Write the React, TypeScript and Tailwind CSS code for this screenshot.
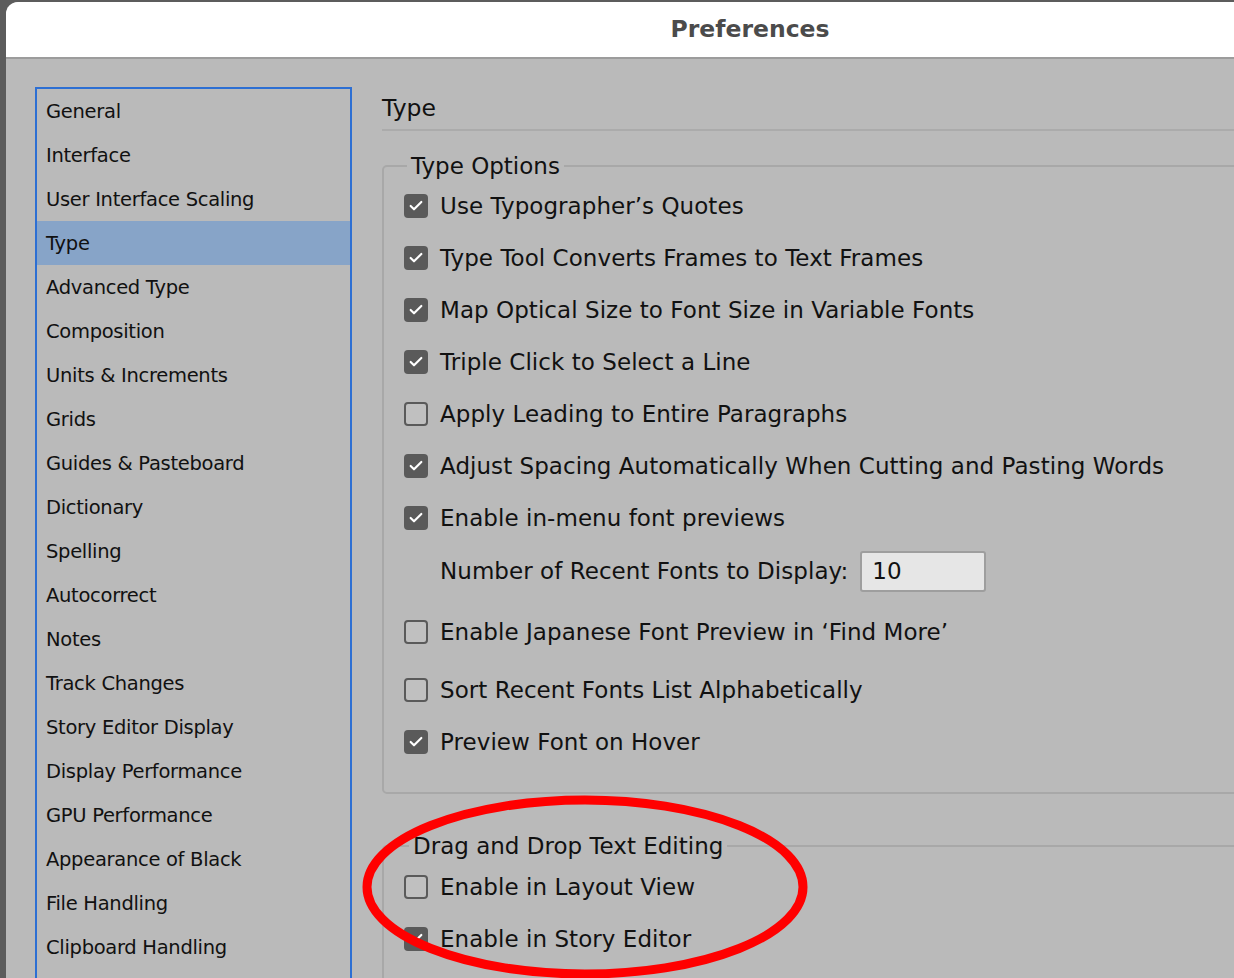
import { Check } from 'lucide-react';

const font = { fontFamily: '"DejaVu Sans", "Liberation Sans", sans-serif' };

const sections = [
  'General',
  'Interface',
  'User Interface Scaling',
  'Type',
  'Advanced Type',
  'Composition',
  'Units & Increments',
  'Grids',
  'Guides & Pasteboard',
  'Dictionary',
  'Spelling',
  'Autocorrect',
  'Notes',
  'Track Changes',
  'Story Editor Display',
  'Display Performance',
  'GPU Performance',
  'Appearance of Black',
  'File Handling',
  'Clipboard Handling',
];

function Box({ checked }: { checked: boolean }) {
  if (checked) {
    return (
      <span className="flex h-[24px] w-[24px] shrink-0 items-center justify-center rounded-[4px] bg-[#5a5a5a]">
        <Check className="h-[16px] w-[16px] text-white" strokeWidth={3.2} />
      </span>
    );
  }
  return <span className="h-[24px] w-[24px] shrink-0 rounded-[4px] border-2 border-[#5a5a5a] bg-[#c0c0c0]" />;
}

function Row({ checked, label, className = 'h-[52px]' }: { checked: boolean; label: string; className?: string }) {
  return (
    <div className={`flex items-center gap-[12px] pl-[19px] ${className}`}>
      <Box checked={checked} />
      <span className="text-[23px] text-[#111] tracking-[0.05px] whitespace-nowrap">{label}</span>
    </div>
  );
}

export default function App() {
  return (
    <div className="relative h-[978px] w-[1234px] overflow-hidden bg-[#5c5c5c] pl-[6px] pt-[2px]" style={font}>
      <div className="flex h-full w-[1488px] flex-col overflow-hidden rounded-tl-[12px] bg-[#bababa]">
        {/* Title bar */}
        <div className="flex h-[57px] shrink-0 items-center justify-center border-b-2 border-[#9c9c9c] bg-white">
          <span className="text-[23.5px] font-bold text-[#4b4b4b]">Preferences</span>
        </div>

        <div className="flex flex-1 pl-[29px] pt-[28px]">
          {/* Sidebar */}
          <div className="w-[317px] shrink-0 border-2 border-b-0 border-[#2d6fd3]">
            {sections.map((s) => (
              <div
                key={s}
                className={`flex h-[44px] items-center pl-[9px] pt-[2px] text-[19.5px] text-[#111] tracking-[-0.3px] ${
                  s === 'Type' ? 'bg-[#87a4c8]' : ''
                }`}
              >
                {s}
              </div>
            ))}
          </div>

          {/* Content */}
          <div className="ml-[30px] flex-1">
            <div className="flex h-[44px] items-center border-b-2 border-[#ababab] pt-[2px] text-[23.5px] text-[#111]">
              Type
            </div>

            <fieldset className="mt-[20px] h-[643px] rounded-[5px] border-2 border-[#a8a8a8] pl-[1px]">
              <legend className="ml-[22px] px-[4px] text-[23px] leading-[30px] text-[#111]">Type Options</legend>
              <Row checked label="Use Typographer’s Quotes" className="-mt-[1px] h-[52px]" />
              <Row checked label="Type Tool Converts Frames to Text Frames" />
              <Row checked label="Map Optical Size to Font Size in Variable Fonts" />
              <Row checked label="Triple Click to Select a Line" />
              <Row checked={false} label="Apply Leading to Entire Paragraphs" />
              <Row checked label="Adjust Spacing Automatically When Cutting and Pasting Words" />
              <Row checked label="Enable in-menu font previews" />
              <div className="flex h-[54px] items-center gap-[12px] pl-[55px]">
                <span className="text-[23px] text-[#111] tracking-[0.05px]">Number of Recent Fonts to Display:</span>
                <div className="flex h-[41px] w-[126px] items-center rounded-[3px] border-2 border-[#9e9e9e] bg-[#e6e6e6] pl-[10px] text-[23px] text-[#111]">
                  10
                </div>
              </div>
              <Row checked={false} label="Enable Japanese Font Preview in ‘Find More’" className="mt-[2px] h-[64px]" />
              <Row checked={false} label="Sort Recent Fonts List Alphabetically" />
              <Row checked label="Preview Font on Hover" />
            </fieldset>

            <fieldset className="mt-[37px] h-[200px] rounded-[5px] border-2 border-b-0 border-[#a8a8a8] pl-[1px]">
              <legend className="ml-[24px] px-[4px] text-[23px] leading-[30px] text-[#111]">Drag and Drop Text Editing</legend>
              <Row checked={false} label="Enable in Layout View" />
              <Row checked label="Enable in Story Editor" />
            </fieldset>
          </div>
        </div>
      </div>

      {/* Red annotation ellipse */}
      <svg className="pointer-events-none absolute left-0 top-0" width="1234" height="978">
        <ellipse cx="585" cy="887" rx="218" ry="87" fill="none" stroke="#ff0000" strokeWidth="9" />
      </svg>
    </div>
  );
}
